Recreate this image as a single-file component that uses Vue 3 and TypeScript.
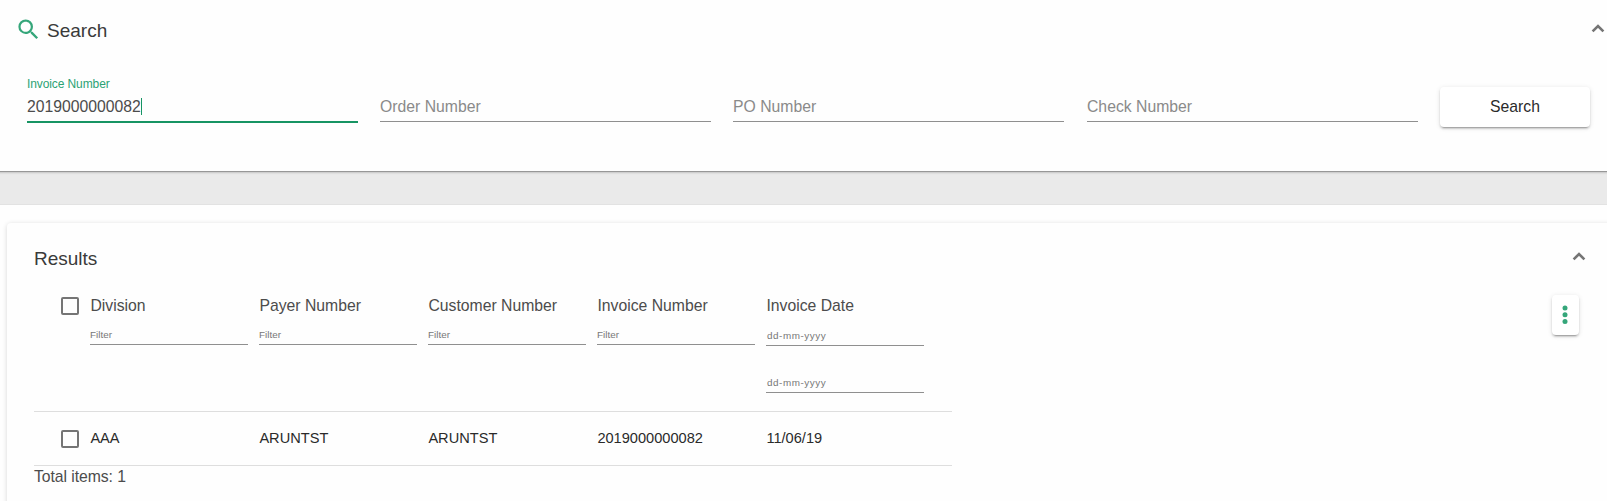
<script setup lang="ts">
import { ref } from 'vue'

interface Field { label: string; value: string; active: boolean }
interface Column { title: string; filters: string[]; date: boolean }

const fields = ref<Field[]>([
  { label: 'Invoice Number', value: '2019000000082', active: true },
  { label: 'Order Number', value: '', active: false },
  { label: 'PO Number', value: '', active: false },
  { label: 'Check Number', value: '', active: false },
])

const columns: Column[] = [
  { title: 'Division', filters: ['Filter'], date: false },
  { title: 'Payer Number', filters: ['Filter'], date: false },
  { title: 'Customer Number', filters: ['Filter'], date: false },
  { title: 'Invoice Number', filters: ['Filter'], date: false },
  { title: 'Invoice Date', filters: ['dd-mm-yyyy', 'dd-mm-yyyy'], date: true },
]

const rows: string[][] = [['AAA', 'ARUNTST', 'ARUNTST', '2019000000082', '11/06/19']]
</script>

<template>
  <div class="page">
    <section class="search-panel">
      <header class="search-head">
        <svg class="search-icon" viewBox="0 0 24 24">
          <path d="M15.5 14h-.79l-.28-.27A6.47 6.47 0 0 0 16 9.5 6.5 6.5 0 1 0 9.5 16c1.61 0 3.09-.59 4.23-1.57l.27.28v.79l5 4.99L20.49 19l-4.99-5zm-6 0C7.01 14 5 11.99 5 9.5S7.01 5 9.5 5 14 7.01 14 9.5 11.99 14 9.5 14z" />
        </svg>
        <h2 class="title">Search</h2>
        <svg class="chevron" viewBox="0 0 14 9"><path d="M1.6 7.4 7 2l5.4 5.4" /></svg>
      </header>
      <div class="fields">
        <div v-for="f in fields" :key="f.label" class="field" :class="{ active: f.active }">
          <span class="float-label">{{ f.active ? f.label : '' }}</span>
          <div class="control">
            <span v-if="f.active" class="value">{{ f.value }}</span>
            <span v-else class="placeholder">{{ f.label }}</span>
            <i v-if="f.active" class="caret"></i>
          </div>
        </div>
        <button class="search-button" type="button">Search</button>
      </div>
    </section>

    <div class="band"></div>

    <section class="results">
      <header class="results-head">
        <h2 class="title">Results</h2>
        <svg class="chevron" viewBox="0 0 14 9"><path d="M1.6 7.4 7 2l5.4 5.4" /></svg>
      </header>
      <div class="results-body">
        <div class="table">
          <div class="table-head">
            <span class="checkbox"></span>
            <div v-for="c in columns" :key="c.title" class="column" :class="{ date: c.date }">
              <div class="column-title">{{ c.title }}</div>
              <div v-for="(p, i) in c.filters" :key="i" class="filter">{{ p }}</div>
            </div>
          </div>
          <div v-for="(row, r) in rows" :key="r" class="table-row">
            <span class="checkbox"></span>
            <div v-for="(cell, i) in row" :key="i" class="cell">{{ cell }}</div>
          </div>
          <div class="total">Total items: {{ rows.length }}</div>
        </div>
        <button class="menu-button" type="button" aria-label="Menu">
          <svg viewBox="0 0 6 20"><circle cx="3" cy="3" r="2.5" /><circle cx="3" cy="9.8" r="2.5" /><circle cx="3" cy="16.6" r="2.5" /></svg>
        </button>
      </div>
    </section>
  </div>
</template>

<style>
body { margin: 0; overflow: hidden; background: #fefefe; }
</style>

<style scoped>
.page {
  height: 501px;
  overflow: hidden;
  display: flex;
  flex-direction: column;
  font-family: "Liberation Sans", Arial, sans-serif;
  font-size: 15.75px;
  color: #4c4c4c;
  background: #fefefe;
}
.search-panel {
  flex: none;
  box-sizing: border-box;
  height: 171px;
  background: #fefefe;
  box-shadow: 0 1px 0 #979797, 0 2px 0 #cecece, 0 3px 1px #dfdfdf;
  z-index: 1;
}
.search-head {
  display: flex;
  align-items: flex-start;
  height: 75px;
  padding: 16px 2px 0 15px;
  box-sizing: border-box;
}
.search-icon { width: 27px; height: 27px; fill: #35a67a; }
.title {
  margin: 0;
  font-size: 19px;
  line-height: 24px;
  font-weight: 400;
  color: #3a3a3a;
}
.search-head .title { margin: 3px 0 0 5px; }
.chevron {
  width: 14px;
  height: 9px;
  margin-left: auto;
  fill: none;
  stroke: #757575;
  stroke-width: 2.6;
}
.search-head .chevron { margin-top: 8px; }
.fields { display: flex; padding-left: 27px; }
.field { width: 331px; margin-right: 22px; height: 48px; }
.field:nth-child(3) { margin-right: 23px; }
.float-label {
  display: block;
  height: 22px;
  line-height: 18px;
  font-size: 12px;
  letter-spacing: -0.1px;
  color: #2ca274;
}
.control {
  display: flex;
  align-items: center;
  box-sizing: border-box;
  height: 25px;
  line-height: 20px;
  padding-bottom: 5px;
  border-bottom: 1px solid #8f8f8f;
}
.active .control { height: 26px; border-bottom: 2px solid #179463; }
.placeholder { color: #8a8a8a; }
.caret { width: 1px; height: 17px; background: #179463; }
.search-button, .menu-button {
  border: 0;
  padding: 0;
  border-radius: 4px;
  background: #fff;
  box-shadow: 0 3px 1px -2px rgba(0,0,0,.2), 0 2px 2px rgba(0,0,0,.14), 0 1px 5px rgba(0,0,0,.12);
}
.search-button {
  width: 150px;
  height: 40px;
  margin-top: 12px;
  font: inherit;
  color: #2a2a2a;
}
.band {
  flex: none;
  box-sizing: border-box;
  height: 34px;
  background: #eaeaea;
  border-bottom: 1px solid #e2e2e2;
}
.results {
  flex: 1;
  box-sizing: border-box;
  margin: 18px -10px -10px 7px;
  padding: 23px 38px 0 27px;
  border-radius: 4px 0 0 0;
  background: #fefefe;
  box-shadow: 0 1px 5px rgba(0,0,0,.16);
}
.results-head { display: flex; height: 49px; }
.results-head .title { padding-top: 1px; }
.results-head .chevron { margin: 6px -7px 0 auto; }
.results-body { display: flex; justify-content: space-between; align-items: flex-start; }
.table { width: 918px; }
.table-head {
  display: flex;
  height: 116px;
  border-bottom: 1px solid #dedede;
}
.checkbox {
  flex: none;
  box-sizing: border-box;
  width: 18px;
  height: 18px;
  margin: 2px 11px 0 27px;
  border: 2px solid #757575;
  border-radius: 2px;
}
.column { width: 158px; margin-right: 11px; flex: none; }
.column-title { height: 33px; line-height: 22px; padding-left: .4px; }
.filter {
  box-sizing: border-box;
  height: 17px;
  padding-top: 1px;
  line-height: 12px;
  font-size: 9.9px;
  color: #777;
  border-bottom: 1px solid #8f8f8f;
}
.date .filter { height: 18px; padding: 2px 0 0 1px; letter-spacing: .55px; }
.date .filter + .filter { margin-top: 29px; }
.table-row {
  display: flex;
  height: 53px;
  border-bottom: 1px solid #dedede;
  font-size: 14.6px;
  line-height: 52px;
  color: #2a2a2a;
}
.table-row .checkbox { margin-top: 18px; }
.cell { width: 169px; flex: none; box-sizing: border-box; padding-left: .4px; }
.total { line-height: 21px; letter-spacing: -0.06px; }
.menu-button {
  display: flex;
  align-items: center;
  justify-content: center;
  width: 27px;
  height: 40px;
}
.menu-button svg { width: 6px; height: 20px; margin-right: 1px; fill: #35a67a; }
</style>
